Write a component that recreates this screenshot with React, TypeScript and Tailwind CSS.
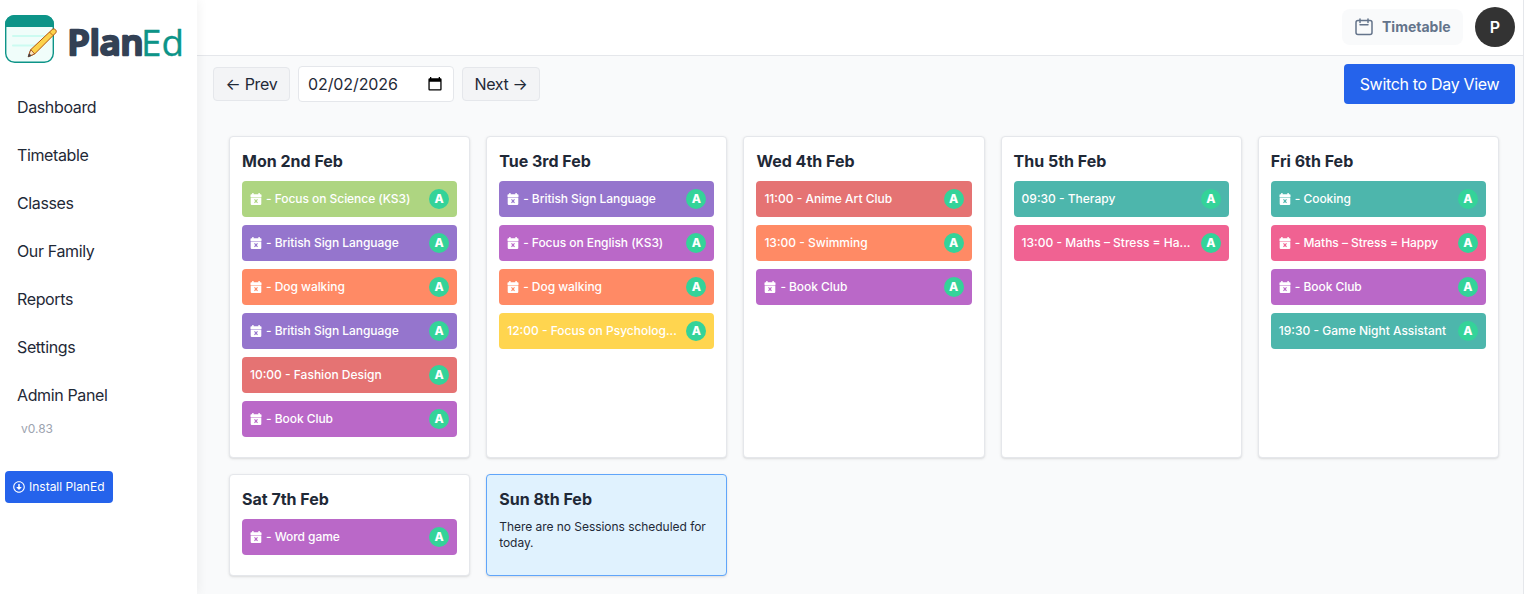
import { FaRegArrowAltCircleDown } from "react-icons/fa";

type Session = { time?: string; title: string; color: string };
type Day = { label: string; today?: boolean; sessions: Session[] };

const LIME = "bg-[#aed581]";
const VIOLET = "bg-[#9575cd]";
const ORANGE = "bg-[#ff8a65]";
const RED = "bg-[#e57373]";
const PURPLE = "bg-[#ba68c8]";
const YELLOW = "bg-[#ffd54f]";
const TEAL = "bg-[#4db6ac]";
const PINK = "bg-[#f06292]";

const days: Day[] = [
  {
    label: "Mon 2nd Feb",
    sessions: [
      { title: "Focus on Science (KS3)", color: LIME },
      { title: "British Sign Language", color: VIOLET },
      { title: "Dog walking", color: ORANGE },
      { title: "British Sign Language", color: VIOLET },
      { time: "10:00", title: "Fashion Design", color: RED },
      { title: "Book Club", color: PURPLE },
    ],
  },
  {
    label: "Tue 3rd Feb",
    sessions: [
      { title: "British Sign Language", color: VIOLET },
      { title: "Focus on English (KS3)", color: PURPLE },
      { title: "Dog walking", color: ORANGE },
      { time: "12:00", title: "Focus on Psycholog...", color: YELLOW },
    ],
  },
  {
    label: "Wed 4th Feb",
    sessions: [
      { time: "11:00", title: "Anime Art Club", color: RED },
      { time: "13:00", title: "Swimming", color: ORANGE },
      { title: "Book Club", color: PURPLE },
    ],
  },
  {
    label: "Thu 5th Feb",
    sessions: [
      { time: "09:30", title: "Therapy", color: TEAL },
      { time: "13:00", title: "Maths – Stress = Ha...", color: PINK },
    ],
  },
  {
    label: "Fri 6th Feb",
    sessions: [
      { title: "Cooking", color: TEAL },
      { title: "Maths – Stress = Happy", color: PINK },
      { title: "Book Club", color: PURPLE },
      { time: "19:30", title: "Game Night Assistant", color: TEAL },
    ],
  },
  { label: "Sat 7th Feb", sessions: [{ title: "Word game", color: PURPLE }] },
  { label: "Sun 8th Feb", today: true, sessions: [] },
];

const links = ["Dashboard", "Timetable", "Classes", "Our Family", "Reports", "Settings", "Admin Panel"];

function Logo() {
  return (
    <svg className="block" width="194" height="56" viewBox="0 8 194 56" role="img" aria-label="PlanEd">
      <rect x="5.700" y="15.700" width="47.600" height="46.600" rx="9" fill="#f0fdfa" stroke="#0d9488" strokeWidth="1.400" />
      <path d="M5 27V24a9 9 0 0 1 9-9h31a9 9 0 0 1 9 9v3z" fill="#0d9488" />
      <path d="M13 36h31M13 45.500h24" stroke="#ccfbf1" strokeWidth="2" strokeLinecap="round" />
      <path d="M28.300 56.700l2.400-7 21.500-20.200c1.300-1 2.600-.6 3.400.3.900 1 .9 2.200 0 3.200L34.600 54z" fill="#fcd34d" stroke="#b45309" strokeWidth="1" strokeLinejoin="round" />
      <path d="M30.800 49.600l3.800 4.300-6.300 2.800z" fill="#fde7c2" stroke="#92400e" strokeWidth=".8" strokeLinejoin="round" />
      <path d="M29.300 53.800l1.800 1.800-2.800 1.100z" fill="#374151" stroke="#374151" strokeWidth=".6" />
      <path d="M49.500 32l3.300 3.300" stroke="#b45309" strokeWidth=".8" />
      <text x="67.500" y="54.500" textLength="76" lengthAdjust="spacingAndGlyphs" fontFamily="'Open Sans', sans-serif" fontSize="34" fontWeight="600" fill="#334155" stroke="#334155" strokeWidth="2.500" strokeLinejoin="round">Plan</text>
      <text x="141" y="55.500" textLength="43" lengthAdjust="spacingAndGlyphs" fontFamily="'Open Sans', sans-serif" fontSize="36" fontWeight="400" fill="#0d9488" stroke="#0d9488" strokeWidth=".3" strokeLinejoin="round">Ed</text>
    </svg>
  );
}

function CalendarXIcon() {
  return (
    <svg className="mr-1 size-3 shrink-0" viewBox="0 0 12 12" fill="white">
      <path d="M2.200 0h1.400v1.300h4.800V0h1.400v1.300h.9c.5 0 .8.3.8.8v2H.5v-2c0-.5.300-.800.800-.800h.900z" />
      <path fillRule="evenodd" d="M.7 4.600h10.600v6.500c0 .5-.3.800-.8.800H1.500c-.5 0-.8-.3-.8-.8zM4.100 6.700L5.200 8.100 4.100 9.600 4.900 10.200 6 8.900 7.100 10.200 7.900 9.600 6.800 8.100 7.900 6.700 7.100 6.100 6 7.300 4.900 6.100z" />
    </svg>
  );
}

function TimetableIcon() {
  return (
    <svg className="size-5" viewBox="0 0 20 20" fill="none" stroke="#64748b" strokeWidth="1.500" strokeLinecap="round" strokeLinejoin="round">
      <rect x="2" y="3.600" width="16" height="14" rx="2" />
      <path d="M6 2v3.400M14 2v3.400M6 7.700h8" />
    </svg>
  );
}

function DateIcon() {
  return (
    <svg className="size-4" viewBox="0 0 16 16" fill="black">
      <path fillRule="evenodd" d="M3 1h1.300v1.200h7.400V1H13v1.200h.4a1.200 1.200 0 0 1 1.200 1.200v9.900a1.200 1.200 0 0 1-1.200 1.200H2.600a1.200 1.200 0 0 1-1.200-1.200V3.400a1.200 1.200 0 0 1 1.200-1.200H3zM2.700 5.800v7.400h10.600V5.800z" />
    </svg>
  );
}

function SessionRow({ session }: { session: Session }) {
  return (
    <div className={`mb-2 flex h-9 items-center justify-between rounded px-2 text-xs font-medium text-white ${session.color}`}>
      {session.time ? (
        <span className="whitespace-nowrap">{`${session.time} - ${session.title}`}</span>
      ) : (
        <span className="flex items-center tracking-[-0.05px] whitespace-nowrap">
          <CalendarXIcon />
          {`- ${session.title}`}
        </span>
      )}
      <span className="flex size-5 shrink-0 items-center justify-center rounded-full bg-[#34d399] font-extrabold">A</span>
    </div>
  );
}

function DayCard({ day }: { day: Day }) {
  return (
    <section className={`min-w-0 rounded border p-3 shadow-sm ${day.today ? "border-[#60a5fa] bg-[#e0f2fe]" : "border-[#e5e7eb] bg-white"}`}>
      <h2 className="mb-2 text-base font-bold">{day.label}</h2>
      {day.sessions.map((s, i) => (
        <SessionRow key={i} session={s} />
      ))}
      {day.sessions.length === 0 && <p className="text-xs tracking-[-0.04px]">There are no Sessions scheduled for today.</p>}
    </section>
  );
}

export default function App() {
  return (
    <div className="flex h-[594px] overflow-hidden bg-[#f9fafb] font-['Inter',sans-serif] text-[#1f2937]">
      <aside className="z-10 flex w-[197px] shrink-0 flex-col bg-white shadow-[2px_0_10px_rgba(0,0,0,0.05)]">
        <div className="pt-2">
          <Logo />
        </div>
        <nav className="mt-[31px] flex flex-col gap-6 pl-[17px]">
          {links.map((l) => (
            <a key={l} className="text-base leading-6 tracking-[-0.37px]">{l}</a>
          ))}
        </nav>
        <p className="mt-[14px] ml-[21px] text-xs leading-4 text-[#9ca3af]">v0.83</p>
        <button className="mt-[34px] ml-[5px] flex h-8 w-[108px] items-center gap-1 rounded bg-[#2563eb] pl-2 text-xs whitespace-nowrap text-white">
          <FaRegArrowAltCircleDown className="size-3 shrink-0" />
          Install PlanEd
        </button>
      </aside>

      <div className="flex min-w-0 flex-1 flex-col border-r border-[#e5e7eb]">
        <header className="flex h-14 shrink-0 items-center justify-end border-b border-[#e5e7eb] bg-white pr-2">
          <div className="mr-3 flex h-9 w-[121px] -translate-y-px items-center gap-2 rounded-lg bg-[#f9fafb] pl-3 text-sm font-bold text-[#64748b]">
            <TimetableIcon />
            Timetable
          </div>
          <div className="flex size-10 -translate-y-px items-center justify-center rounded-full bg-[#333] text-base font-semibold text-white">P</div>
        </header>

        <main className="pt-2 pr-2 pl-4">
          <div className="flex items-center">
            <button className="h-[34px] w-[77px] rounded border border-[#e5e7eb] bg-[#f3f4f6] tracking-[-0.3px] whitespace-nowrap">← Prev</button>
            <div className="ml-2 flex h-9 w-[156px] items-center justify-between rounded border border-[#e5e7eb] bg-white pr-[10px] pl-[9px]">
              <span className="tracking-[-0.1px]">02/02/2026</span>
              <DateIcon />
            </div>
            <button className="ml-2 h-[34px] w-[78px] rounded border border-[#e5e7eb] bg-[#f3f4f6] tracking-[-0.35px] whitespace-nowrap">Next →</button>
            <button className="ml-auto h-10 w-[171px] rounded bg-[#2563eb] tracking-[-0.32px] whitespace-nowrap text-white">Switch to Day View</button>
          </div>
          <div className="mt-8 mr-4 ml-4 grid grid-cols-5 gap-4">
            {days.map((d) => (
              <DayCard key={d.label} day={d} />
            ))}
          </div>
        </main>
      </div>
    </div>
  );
}
